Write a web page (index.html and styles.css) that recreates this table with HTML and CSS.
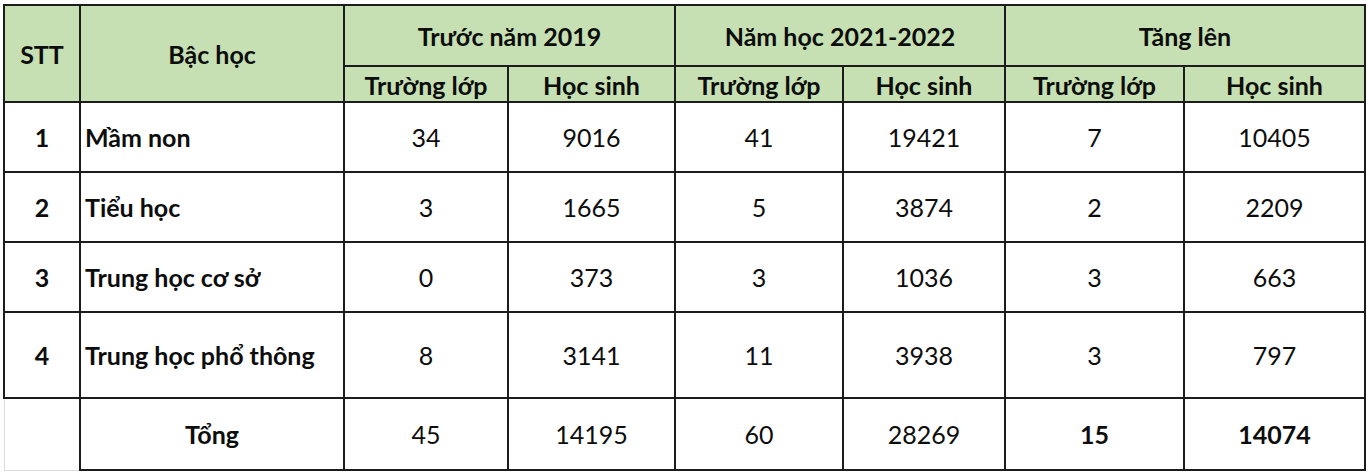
FILE: index.html
```html
<!DOCTYPE html>
<html lang="vi">
<head>
<meta charset="utf-8">
<title>Bảng thống kê</title>
<link rel="stylesheet" href="styles.css">
</head>
<body>
<div class="sheet">
<table class="stats">
  <colgroup>
    <col class="c-stt"><col class="c-name"><col class="c-a1"><col class="c-a2"><col class="c-b1"><col class="c-b2"><col class="c-d1"><col class="c-d2">
  </colgroup>
  <thead>
    <tr class="h1">
      <th rowspan="2">STT</th>
      <th rowspan="2">Bậc học</th>
      <th colspan="2">Trước năm 2019</th>
      <th colspan="2">Năm học 2021-2022</th>
      <th colspan="2">Tăng lên</th>
    </tr>
    <tr class="h2">
      <th>Trường lớp</th><th>Học sinh</th>
      <th>Trường lớp</th><th>Học sinh</th>
      <th>Trường lớp</th><th>Học sinh</th>
    </tr>
  </thead>
  <tbody>
    <tr class="r">
      <td class="stt">1</td><td class="name">Mầm non</td>
      <td>34</td><td>9016</td><td>41</td><td>19421</td><td>7</td><td>10405</td>
    </tr>
    <tr class="r">
      <td class="stt">2</td><td class="name">Tiểu học</td>
      <td>3</td><td>1665</td><td>5</td><td>3874</td><td>2</td><td>2209</td>
    </tr>
    <tr class="r">
      <td class="stt">3</td><td class="name">Trung học cơ sở</td>
      <td>0</td><td>373</td><td>3</td><td>1036</td><td>3</td><td>663</td>
    </tr>
    <tr class="r r-tall">
      <td class="stt">4</td><td class="name">Trung học phổ thông</td>
      <td>8</td><td>3141</td><td>11</td><td>3938</td><td>3</td><td>797</td>
    </tr>
    <tr class="total">
      <td class="blank"></td><td class="label">Tổng</td>
      <td>45</td><td>14195</td><td>60</td><td>28269</td><td class="strong">15</td><td class="strong">14074</td>
    </tr>
  </tbody>
</table>
</div>
</body>
</html>
```
FILE: styles.css
```css
html, body {
  margin: 0;
  padding: 0;
  background: #ffffff;
}
.sheet {
  padding: 4px 0 0 3px;
  font-family: Lato, "Open Sans", "Liberation Sans", sans-serif;
  color: #0d0d0d;
}
.stats {
  border-collapse: collapse;
  table-layout: fixed;
  width: 1361px;
  font-size: 25px;
}
.c-stt { width: 76px; }
.c-name { width: 264px; }
.c-a1 { width: 164px; }
.c-a2 { width: 167px; }
.c-b1 { width: 168px; }
.c-b2 { width: 162px; }
.c-d1 { width: 179px; }
.c-d2 { width: 181px; }

.stats th, .stats td {
  border: 2px solid #1c1c1c;
  padding: 0 4px;
  text-align: center;
  vertical-align: middle;
  white-space: nowrap;
}
.stats th {
  background: #c6e0b4;
  font-weight: 700;
}
.h1 { height: 61px; }
.h2 { height: 36px; }
.h2 th { padding-top: 1px; }
.r { height: 70px; }
.r-tall { height: 86px; }
.total { height: 72px; }

.stats td { font-weight: 400; }
.stats td.stt, .stats td.name, .stats td.label, .stats td.strong { font-weight: 700; }
.stats td.name { text-align: left; }
.stats td.blank {
  border-left: 1px solid #dcdcdc;
  border-bottom: 1px solid #dcdcdc;
}
```
